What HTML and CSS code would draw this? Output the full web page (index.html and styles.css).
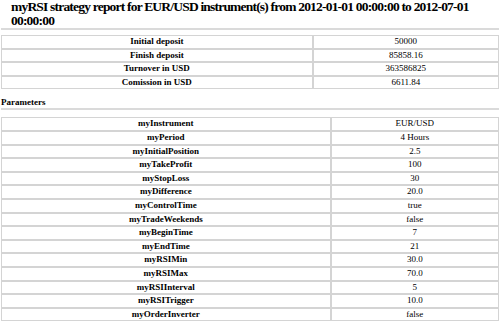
FILE: index.html
```html
<!DOCTYPE html>
<html lang="en">
<head>
    <meta charset="UTF-8">
    <title>myRSI strategy report</title>
    <link rel="stylesheet" href="styles.css">
</head>
<body>
    <h2 class="title">myRSI strategy report for EUR/USD instrument(s) from 2012-01-01 00:00:00 to 2012-07-01 00:00:00</h2>
    <hr>
    <table class="report summary">
        <tr><th>Initial deposit</th><td>50000</td></tr>
        <tr><th>Finish deposit</th><td>85858.16</td></tr>
        <tr><th>Turnover in USD</th><td>363586825</td></tr>
        <tr><th>Comission in USD</th><td>6611.84</td></tr>
    </table>

    <h3 class="section">Parameters</h3>
    <hr>
    <table class="report params">
        <tr><th>myInstrument</th><td>EUR/USD</td></tr>
        <tr><th>myPeriod</th><td>4 Hours</td></tr>
        <tr><th>myInitialPosition</th><td>2.5</td></tr>
        <tr><th>myTakeProfit</th><td>100</td></tr>
        <tr><th>myStopLoss</th><td>30</td></tr>
        <tr><th>myDifference</th><td>20.0</td></tr>
        <tr><th>myControlTime</th><td>true</td></tr>
        <tr><th>myTradeWeekends</th><td>false</td></tr>
        <tr><th>myBeginTime</th><td>7</td></tr>
        <tr><th>myEndTime</th><td>21</td></tr>
        <tr><th>myRSIMin</th><td>30.0</td></tr>
        <tr><th>myRSIMax</th><td>70.0</td></tr>
        <tr><th>myRSIInterval</th><td>5</td></tr>
        <tr><th>myRSITrigger</th><td>10.0</td></tr>
        <tr><th>myOrderInverter</th><td>false</td></tr>
    </table>
</body>
</html>
```

FILE: styles.css
```css
body {
    font-family: "Liberation Serif", "Times New Roman", serif;
    margin: 0;
    padding: 0 1px;
    color: #000;
    background: #fff;
}
.title {
    font-size: 13.5px;
    line-height: 14px;
    letter-spacing: -0.8px;
    margin: 0;
    padding: 0 0 0 10px;
}
hr {
    border: none;
    height: 2px;
    background: #dadada;
    margin: 0;
}
.report {
    width: 100%;
    border-collapse: separate;
    border-spacing: 0;
    font-size: 9px;
}
.summary {
    margin-top: 5px;
}
.params {
    margin-top: 7px;
}
.report th,
.report td {
    border: 1px solid #d4d4d4;
    padding: 0;
    line-height: 11.6px;
    text-align: center;
}
.report th {
    font-weight: bold;
}
.summary th {
    width: 62.6%;
}
.params th {
    width: 66.2%;
}
.section {
    font-size: 9px;
    line-height: 12px;
    margin: 7px 0 0 0;
}
```
